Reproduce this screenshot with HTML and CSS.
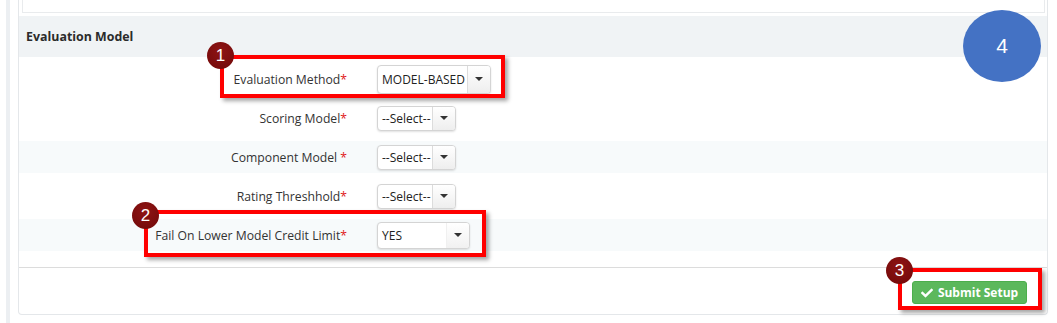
FILE: index.html
```html
<!DOCTYPE html>
<html lang="en">
<head>
    <meta charset="UTF-8">
    <meta name="viewport" content="width=device-width, initial-scale=1.0">
    <title>Evaluation Model</title>
    <link rel="stylesheet" href="styles.css">
</head>
<body>
    <div class="page">
        <div class="rail"></div>
        <div class="panel">
            <div class="prev-section"></div>
            <div class="panel-heading">Evaluation Model</div>
            <div class="panel-body">
                <div class="form-row">
                    <label class="form-label">Evaluation Method<span class="req">*</span></label>
                    <div class="form-field">
                        <div class="select select-wide">
                            <span class="select-value">MODEL-BASED</span>
                            <span class="select-btn"><i class="caret"></i></span>
                        </div>
                    </div>
                </div>
                <div class="form-row">
                    <label class="form-label">Scoring Model<span class="req">*</span></label>
                    <div class="form-field">
                        <div class="select select-small">
                            <span class="select-value">--Select--</span>
                            <span class="select-btn"><i class="caret"></i></span>
                        </div>
                    </div>
                </div>
                <div class="form-row striped">
                    <label class="form-label">Component Model <span class="req">*</span></label>
                    <div class="form-field">
                        <div class="select select-small">
                            <span class="select-value">--Select--</span>
                            <span class="select-btn"><i class="caret"></i></span>
                        </div>
                    </div>
                </div>
                <div class="form-row">
                    <label class="form-label">Rating Threshhold<span class="req">*</span></label>
                    <div class="form-field">
                        <div class="select select-small">
                            <span class="select-value">--Select--</span>
                            <span class="select-btn"><i class="caret"></i></span>
                        </div>
                    </div>
                </div>
                <div class="form-row striped">
                    <label class="form-label">Fail On Lower Model Credit Limit<span class="req">*</span></label>
                    <div class="form-field">
                        <div class="select select-yes">
                            <span class="select-value">YES</span>
                            <span class="select-btn plain"><i class="caret"></i></span>
                        </div>
                    </div>
                </div>
            </div>
            <div class="panel-footer">
                <button class="btn-success">
                    <svg class="icon-check" viewBox="0 0 512 512"><path d="M173.9 439.4l-166.4-166.4c-10-10-10-26.2 0-36.2l36.2-36.2c10-10 26.2-10 36.2 0L192 312.7 432.1 72.6c10-10 26.2-10 36.2 0l36.2 36.2c10 10 10 26.2 0 36.2l-294.4 294.4c-10 10-26.2 10-36.2 0z"/></svg>
                    Submit Setup
                </button>
            </div>
        </div>
    </div>

    <!-- annotation callouts drawn over the form -->
    <div class="callout callout-1"></div>
    <div class="callout callout-2"></div>
    <div class="callout callout-3"></div>
    <div class="badge badge-1">1</div>
    <div class="badge badge-2">2</div>
    <div class="badge badge-3">3</div>
    <div class="step-bubble">4</div>
</body>
</html>
```

FILE: styles.css
```css
body {
    font-family: "Open Sans", Arial, sans-serif;
    margin: 0;
    padding: 0;
    background-color: #ffffff;
    color: #333;
    font-size: 12px;
}
.page {
    display: flex;
    padding-left: 6px;
    width: 1042px;
}
.rail {
    width: 4px;
    background-color: #eceff2;
    height: 323px;
    margin-right: 8px;
}
.panel {
    flex: 1;
    border: 1px solid #e4e7ea;
    border-top: none;
    border-radius: 0 0 4px 4px;
    height: 315px;
    box-sizing: border-box;
}
.prev-section {
    height: 12px;
    margin: 0 2px 0 3px;
    border: 1px solid #e9ebed;
    border-top: none;
}
.panel-heading {
    margin-top: 3px;
    height: 41px;
    background-color: #f0f3f5;
    padding-left: 7px;
    font-weight: bold;
    font-size: 12.4px;
    color: #2b2b2b;
    display: flex;
    align-items: center;
}
.panel-body {
    padding: 6px 0 16px;
}
.form-row {
    display: flex;
    align-items: center;
    height: 32px;
    margin-bottom: 7px;
}
.form-row:last-child {
    margin-bottom: 0;
}
.form-row.striped {
    background-color: #f7fafb;
}
.form-label {
    width: 343px;
    box-sizing: border-box;
    padding-right: 15px;
    text-align: right;
    color: #333;
    font-size: 12.2px;
}
.req {
    color: #e02020;
}
.form-field {
    padding-left: 15px;
    display: flex;
}
.select {
    display: flex;
    height: 25px;
    border: 1px solid #d4d4d4;
    border-radius: 4px;
    background-color: #fff;
    box-shadow: 0 1px 2px rgba(0,0,0,0.12);
    box-sizing: border-box;
    overflow: hidden;
}
.select-wide {
    width: 114px;
    height: 29px;
}
.select-small {
    width: 79px;
}
.select-yes {
    width: 93px;
    height: 27px;
}
.select-value {
    flex: 1;
    padding-left: 4px;
    display: flex;
    align-items: center;
    color: #222;
    white-space: nowrap;
}
.select-btn {
    width: 22px;
    border-left: 1px solid #dcdcdc;
    background: linear-gradient(#ffffff, #eeeeee);
    display: flex;
    align-items: center;
    justify-content: center;
}
.select-btn.plain {
    border-left-color: #f0f0f0;
    background: linear-gradient(#ffffff, #f1f1f1);
}
.caret {
    width: 0;
    height: 0;
    border-top: 4px solid #333;
    border-left: 4px solid transparent;
    border-right: 4px solid transparent;
}
.panel-footer {
    border-top: 1px solid #dcdcdc;
    padding: 13px 20px 0 0;
    display: flex;
    justify-content: flex-end;
}
.btn-success {
    font-family: "Open Sans", Arial, sans-serif;
    font-weight: bold;
    font-size: 12px;
    color: #fff;
    background-color: #5cb85c;
    border: 1px solid #4cae4c;
    border-radius: 3px;
    width: 115px;
    height: 23px;
    padding: 0;
    display: flex;
    align-items: center;
    justify-content: center;
    gap: 5px;
}
.icon-check {
    width: 12px;
    height: 12px;
    fill: #fff;
}
.callout {
    position: absolute;
    border: 4px solid #ff0000;
    box-shadow: 3px 3px 4px rgba(0,0,0,0.35);
    box-sizing: border-box;
}
.callout-1 {
    left: 220px;
    top: 55px;
    width: 285px;
    height: 43px;
}
.callout-2 {
    left: 144px;
    top: 210px;
    width: 342px;
    height: 47px;
}
.callout-3 {
    left: 898px;
    top: 268px;
    width: 144px;
    height: 42px;
}
.badge {
    position: absolute;
    width: 27px;
    height: 27px;
    border-radius: 50%;
    background: radial-gradient(circle at 50% 35%, #8e1414, #700808);
    color: #fff;
    font-family: "Liberation Sans", Arial, sans-serif;
    font-size: 17px;
    display: flex;
    align-items: center;
    justify-content: center;
}
.badge-1 {
    left: 207px;
    top: 42px;
}
.badge-2 {
    left: 132px;
    top: 202px;
}
.badge-3 {
    left: 886px;
    top: 257px;
}
.step-bubble {
    position: absolute;
    left: 963px;
    top: 10px;
    width: 78px;
    height: 72px;
    border-radius: 50%;
    background-color: #4472c4;
    color: #fff;
    font-family: "Liberation Sans", Arial, sans-serif;
    font-size: 21px;
    display: flex;
    align-items: center;
    justify-content: center;
}
```
